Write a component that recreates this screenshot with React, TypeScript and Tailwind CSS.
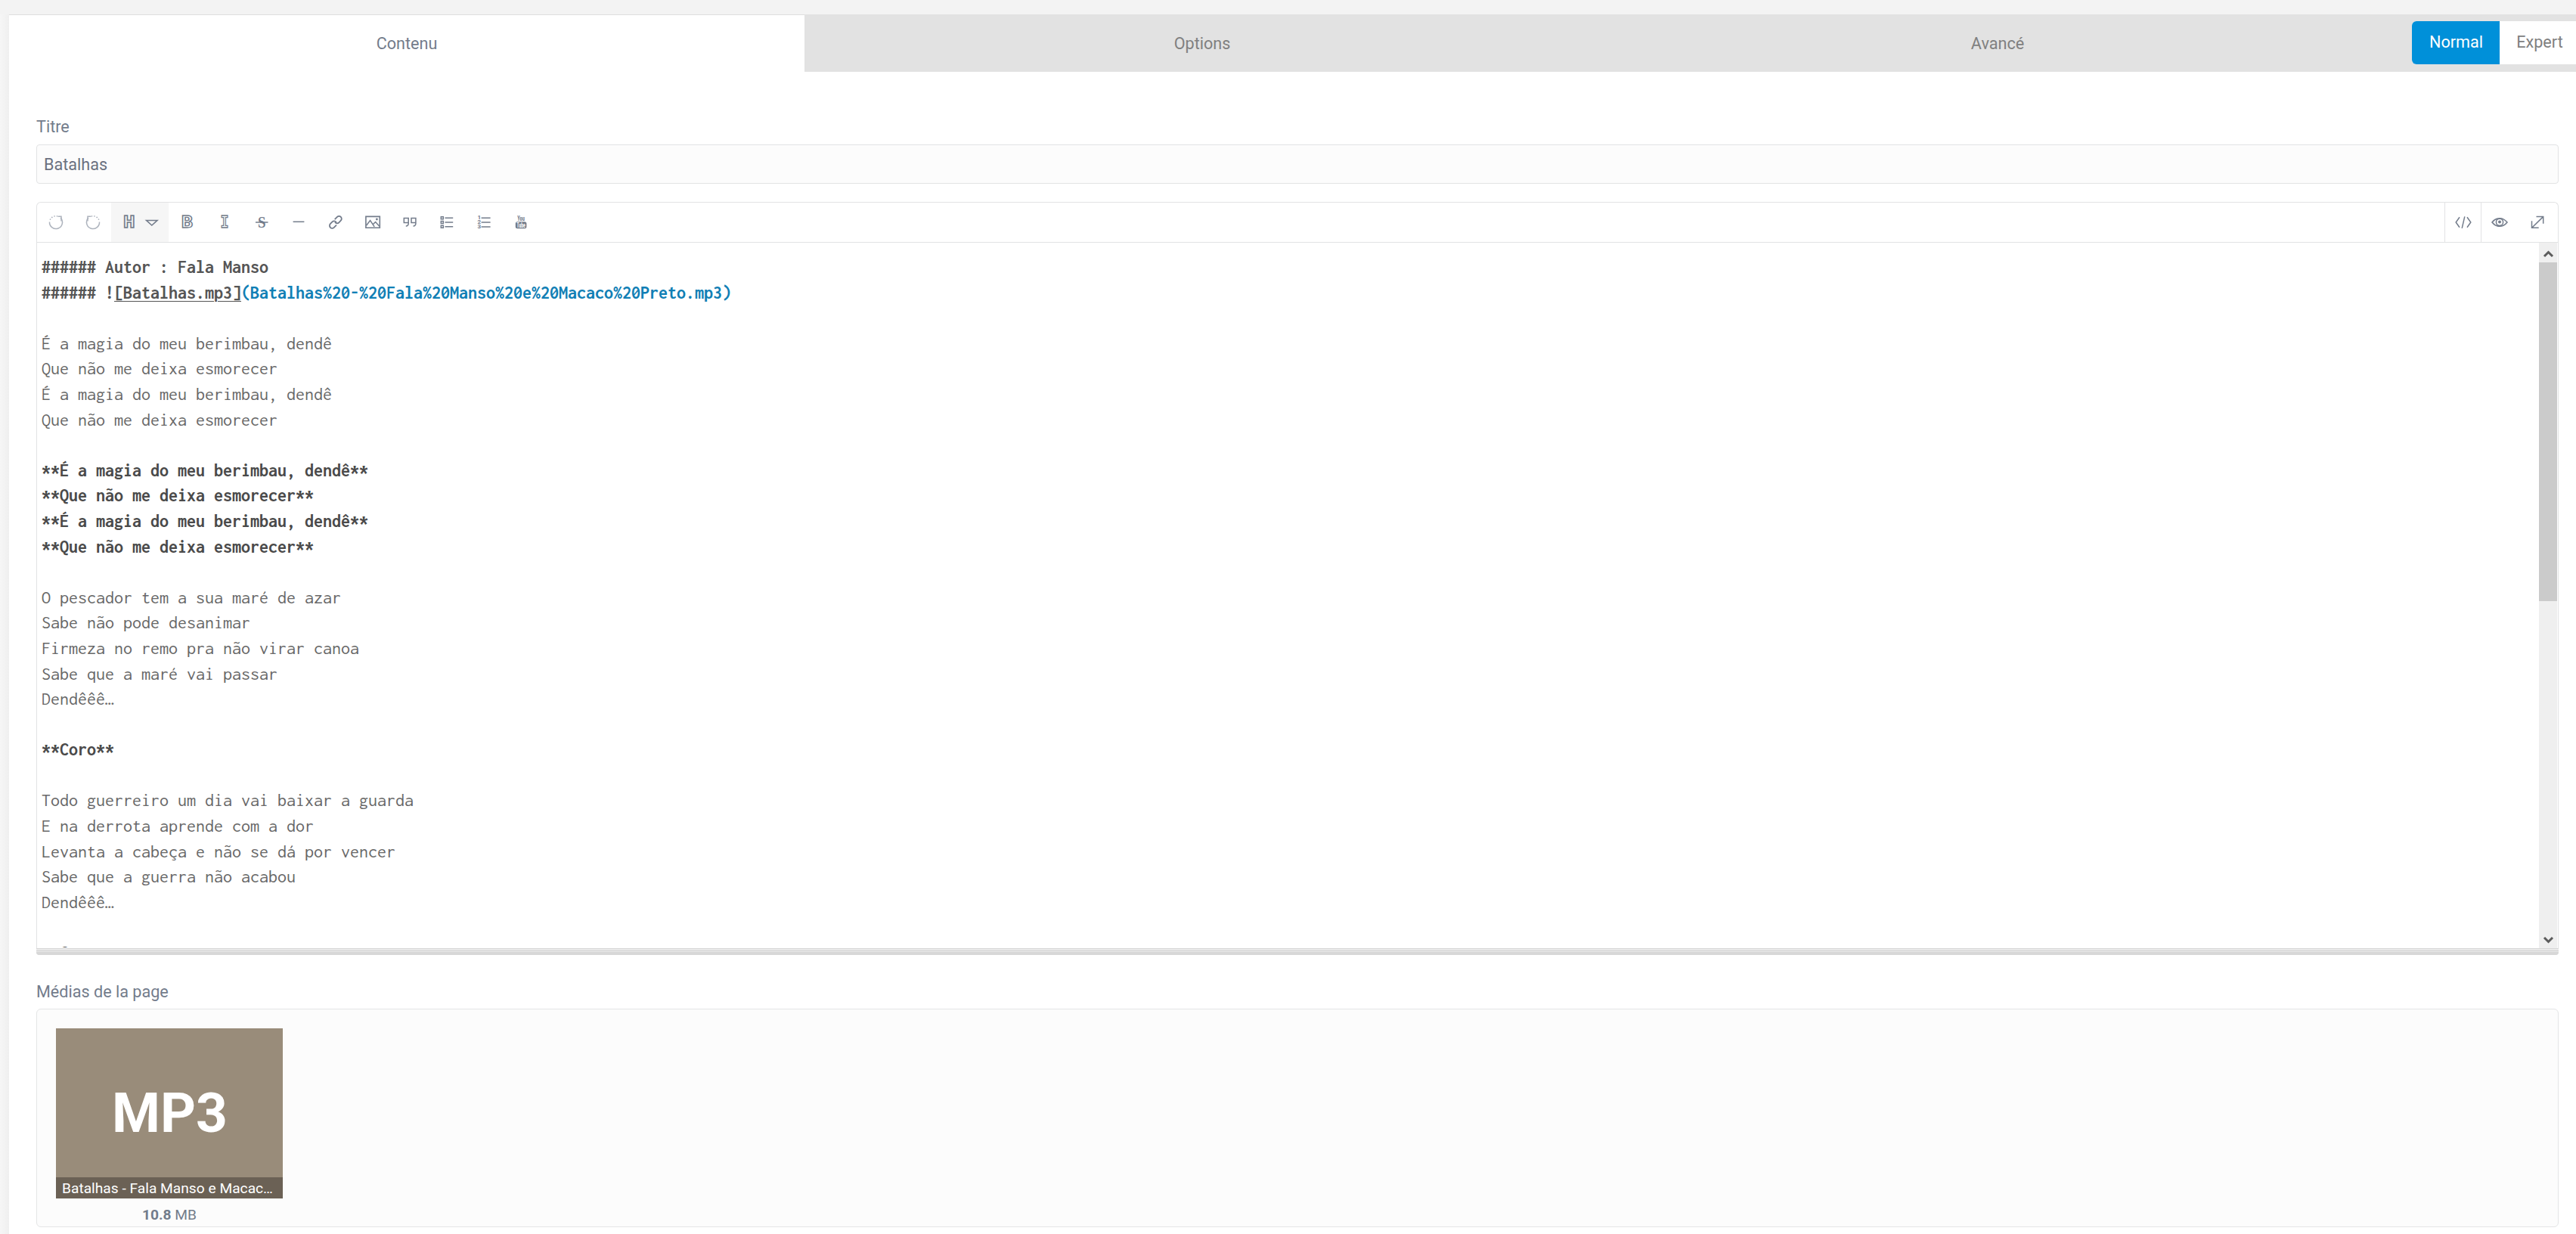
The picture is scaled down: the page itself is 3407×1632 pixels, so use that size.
import type { ReactNode } from 'react';

const tabs = ['Contenu', 'Options', 'Avancé'];

type Line = { text: string; bold?: boolean };

const lyrics: Line[] = [
	{ text: '' },
	{ text: 'É a magia do meu berimbau, dendê' },
	{ text: 'Que não me deixa esmorecer' },
	{ text: 'É a magia do meu berimbau, dendê' },
	{ text: 'Que não me deixa esmorecer' },
	{ text: '' },
	{ text: '**É a magia do meu berimbau, dendê**', bold: true },
	{ text: '**Que não me deixa esmorecer**', bold: true },
	{ text: '**É a magia do meu berimbau, dendê**', bold: true },
	{ text: '**Que não me deixa esmorecer**', bold: true },
	{ text: '' },
	{ text: 'O pescador tem a sua maré de azar' },
	{ text: 'Sabe não pode desanimar' },
	{ text: 'Firmeza no remo pra não virar canoa' },
	{ text: 'Sabe que a maré vai passar' },
	{ text: 'Dendêêê…' },
	{ text: '' },
	{ text: '**Coro**', bold: true },
	{ text: '' },
	{ text: 'Todo guerreiro um dia vai baixar a guarda' },
	{ text: 'E na derrota aprende com a dor' },
	{ text: 'Levanta a cabeça e não se dá por vencer' },
	{ text: 'Sabe que a guerra não acabou' },
	{ text: 'Dendêêê…' },
	{ text: '' },
	{ text: '**Coro**', bold: true },
];

const Icon = ({ children }: { children: ReactNode }) => (
	<svg
		className="h-6 w-6 overflow-visible"
		viewBox="0 0 24 24"
		fill="none"
		stroke="currentColor"
		strokeWidth="1.5"
	>
		{children}
	</svg>
);

const OutlineLetter = ({ letter, x, width }: { letter: string; x: number; width: number }) => (
	<Icon>
		<text
			x={x}
			y="19.2"
			textLength={width}
			lengthAdjust="spacingAndGlyphs"
			strokeWidth="1.3"
			className="font-['DejaVu_Sans_Mono',monospace] text-[20.5px] font-bold"
		>
			{letter}
		</text>
	</Icon>
);

const UndoIcon = () => (
	<Icon>
		<path d="M18 6A8.5 8.5 0 1 1 3.5 11.5" />
		<path d="M4.2 8.8A8.5 8.5 0 0 1 14 3.9" strokeDasharray="1.5 2" />
		<path d="M14.5 4.2H19V10.5" />
	</Icon>
);

const RedoIcon = () => (
	<Icon>
		<path d="M6 6A8.5 8.5 0 1 0 20.5 11.5" />
		<path d="M19.8 8.8A8.5 8.5 0 0 0 10 3.9" strokeDasharray="1.5 2" />
		<path d="M9.5 4.2H5V10.5" />
	</Icon>
);

const StrikeIcon = () => (
	<Icon>
		<text
			x="7"
			y="18.8"
			textLength="10.5"
			lengthAdjust="spacingAndGlyphs"
			fill="currentColor"
			stroke="none"
			className="font-['Liberation_Serif',serif] text-[21px] font-bold"
		>
			S
		</text>
		<path d="M4 12H20.5" />
	</Icon>
);

const LinkIcon = () => (
	<Icon>
		<g transform="rotate(-45 12 12)" strokeWidth="1.8">
			<path d="M10.2 15.2H5.6a3.4 3.4 0 0 1 0-6.8h3.6a3.4 3.4 0 0 1 3.3 4.2" />
			<path d="M13.8 8.4h4.6a3.4 3.4 0 0 1 0 6.8h-3.6a3.4 3.4 0 0 1-3.3-4.2" />
		</g>
	</Icon>
);

const ImageIcon = () => (
	<Icon>
		<path d="M2.9 4.4h18.4v14.8H2.9z" strokeWidth="1.6" />
		<path d="M3.5 16.2 8.6 9.6l5.6 8.2M12.2 14.8l3.4-3.2 5.2 5.6" />
		<circle cx="17.4" cy="8" r="1.4" fill="currentColor" stroke="none" />
	</Icon>
);

const QuoteIcon = () => (
	<Icon>
		<path d="M10.2 6.6H4.3v6h5.9zM10.2 11v2.6c0 2-1.2 3.4-3.4 3.4" />
		<path d="M19.9 6.6H14v6h5.9zM19.9 11v2.6c0 2-1.2 3.4-3.4 3.4" />
	</Icon>
);

const BulletsIcon = () => (
	<Icon>
		<path d="M4.3 4.8h3v3h-3zM4.3 10.6h3v3h-3zM4.3 16.2h3v3h-3z" />
		<path d="M9.5 6.3h10.7M9.5 12.1h10.7M9.5 17.7h10.7" />
	</Icon>
);

const NumbersIcon = () => (
	<Icon>
		<path d="M8.6 6.3h12M8.6 12.1h12M8.6 17.9h12" />
		<g fill="currentColor" stroke="none" className="font-[Roboto,sans-serif] text-[8px] font-bold">
			<text x="3.6" y="8">1</text>
			<text x="3.6" y="14.4">2</text>
			<text x="3.6" y="20.4">3</text>
		</g>
	</Icon>
);

const YoutubeIcon = () => (
	<Icon>
		<rect x="4.8" y="11.2" width="14.6" height="9" rx="2.5" fill="currentColor" stroke="none" />
		<g stroke="none" className="font-['Roboto_Condensed',Roboto,sans-serif] text-[8.5px] font-bold">
			<text x="7.2" y="9.8" textLength="9.6" lengthAdjust="spacingAndGlyphs" fill="currentColor">You</text>
			<text x="6.6" y="18.8" textLength="11" lengthAdjust="spacingAndGlyphs" fill="white">Tube</text>
		</g>
	</Icon>
);

const ToolButton = ({ children }: { children: ReactNode }) => (
	<button className="flex w-[49px] items-center justify-center">{children}</button>
);

const ScrollArrow = ({ d }: { d: string }) => (
	<svg className="h-[26px] w-6" viewBox="0 0 24 26" fill="none" stroke="#5c5c5c" strokeWidth="3">
		<path d={d} />
	</svg>
);

const Toolbar = () => (
	<div className="flex h-[53px] justify-between border-b border-[#e2e3e4] text-[#737c8b]">
		<div className="flex">
			<div className="flex text-[#adb3bd]">
				<ToolButton><UndoIcon /></ToolButton>
				<ToolButton><RedoIcon /></ToolButton>
			</div>
			<button className="flex w-[76px] items-center justify-center gap-1.5 bg-[#f6f6f6] pl-0.5">
				<OutlineLetter letter="H" x={4} width={15.5} />
				<Icon>
					<path d="M4.5 9.4h14.6L11.8 16z" />
				</Icon>
			</button>
			<ToolButton><OutlineLetter letter="B" x={4} width={15} /></ToolButton>
			<ToolButton><OutlineLetter letter="I" x={6.5} width={11} /></ToolButton>
			<ToolButton><StrikeIcon /></ToolButton>
			<ToolButton>
				<Icon>
					<path d="M4.6 11.3h14.8" />
				</Icon>
			</ToolButton>
			<ToolButton><LinkIcon /></ToolButton>
			<ToolButton><ImageIcon /></ToolButton>
			<ToolButton><QuoteIcon /></ToolButton>
			<ToolButton><BulletsIcon /></ToolButton>
			<ToolButton><NumbersIcon /></ToolButton>
			<ToolButton><YoutubeIcon /></ToolButton>
		</div>
		<div className="flex pr-[3px]">
			<button className="flex w-12 items-center justify-center border-l border-[#e2e3e4]">
				<Icon>
					<path d="M7 5.2 2.2 12 7 18.8M17 5.2 21.8 12 17 18.8M13.8 4.4 10.2 19.8" />
				</Icon>
			</button>
			<button className="flex w-[50px] items-center justify-center border-l border-[#e2e3e4] pr-px">
				<Icon>
					<path d="M2 12c3-3.7 6.3-5.3 10-5.3s7 1.6 10 5.3c-3 3.7-6.3 5.3-10 5.3S5 15.7 2 12z" />
					<circle cx="12" cy="11.8" r="4.6" />
					<circle cx="12" cy="11.5" r="2" fill="currentColor" stroke="none" />
				</Icon>
			</button>
			<ToolButton>
				<Icon>
					<path d="M4.6 19.2 19.6 4.6M10.5 4.5h9.2v9.2M4.5 10.3v9h9.2" />
				</Icon>
			</ToolButton>
		</div>
	</div>
);

const Editor = () => (
	<div className="mt-6 rounded-t-md border-x border-t border-[#e2e3e4]">
		<Toolbar />
		<div className="flex h-[933px]">
			<div className="flex-1 overflow-hidden border-b border-white pt-4 pl-1.5 font-['Inconsolata','Liberation_Mono',monospace] text-2xl leading-[33.6px] whitespace-pre text-[#686868]">
				<div className="font-bold text-[#555]">###### Autor : Fala Manso</div>
				<div className="font-bold text-[#555]">
					###### !<span className="underline decoration-1 underline-offset-[3px]">[Batalhas.mp3]</span>
					<span className="text-[#117fb5]">(Batalhas%20-%20Fala%20Manso%20e%20Macaco%20Preto.mp3)</span>
				</div>
				{lyrics.map((line, i) => (
					<div key={i} className={line.bold ? 'h-[33.6px] font-bold text-[#4a4a4a]' : 'h-[33.6px]'}>
						{line.text}
					</div>
				))}
			</div>
			{/* Scrollbar */}
			<div className="mr-px flex w-6 flex-col bg-[#efefef]">
				<ScrollArrow d="M7 18 12.5 12.5 18 18" />
				<div className="h-[448px] bg-[#cbcbcb]" />
				<div className="mt-auto">
					<ScrollArrow d="M7 12 12.5 17.5 18 12" />
				</div>
			</div>
		</div>
	</div>
);

const ResizeHandle = () => (
	<div className="flex h-[9px] flex-col overflow-hidden rounded-b-sm bg-[#e9e9e9]">
		<div className="h-0.5 bg-[#d7d7d7]" />
		<div className="mt-0.5 h-px bg-[#d2d2d2]" />
		<div className="mt-0.5 h-2 bg-[#d7d7d7]" />
	</div>
);

const Medias = () => (
	<div className="mt-1.5 h-[289px] rounded-md border border-[#e4e5e6] bg-[#fcfcfc] p-[25px]">
		<div className="w-[300px]">
			<div className="flex h-[225px] flex-col bg-[#998c7a]">
				<div className="flex h-[197px] items-center justify-center pt-[27px] pl-px text-[73px] leading-none font-bold text-white">
					MP3
				</div>
				<div className="h-7 bg-[#6b6155] px-2 pt-px text-[19.2px] leading-7 whitespace-nowrap text-white">
					Batalhas - Fala Manso e Macac…
				</div>
			</div>
			<div className="pt-2 text-center text-[19.2px] leading-7">
				<b>10.8</b> MB
			</div>
		</div>
	</div>
);

const App = () => {
	return (
		<div className="flex h-[1632px] w-[3407px] flex-col overflow-hidden bg-[#f3f3f3] font-[Roboto,sans-serif] text-[21.6px] text-[#737c8b]">
			<div className="h-[19px] shrink-0" />
			<div className="flex flex-1">
				<div className="w-3 bg-gradient-to-r from-[#f6f6f6] to-[#efefef]" />
				<main className="flex-1 bg-white">
					{/* Tabs */}
					<div className="relative flex h-[76px] bg-[#e2e2e2]">
						{tabs.map((tab, i) => (
							<div
								key={tab}
								className={
									i === 0
										? 'flex w-[1052px] items-center justify-center border-t border-[#dedede] bg-white pt-0.5'
										: 'flex w-[1052px] items-center justify-center pt-[3px] text-[#808080]'
								}
							>
								{tab}
							</div>
						))}
						<div className="absolute top-[9px] right-0 flex h-[57px] w-[217px] overflow-hidden rounded-l-md bg-white text-[#808080]">
							<button className="w-[116px] bg-[#0090d9] pl-px text-white">Normal</button>
							<button className="w-[101px] pl-[5px]">Expert</button>
						</div>
					</div>

					<div className="pr-[23px] pl-9">
						<div className="flex h-24 items-end pb-[7px] leading-[33px]">Titre</div>
						<input
							className="block h-[52px] w-full rounded border border-[#e2e3e4] bg-[#fcfcfc] px-[9px] text-[#6b7180]"
							defaultValue="Batalhas"
						/>
						<Editor />
						<ResizeHandle />
						<div className="mt-[33px] leading-8">Médias de la page</div>
						<Medias />
					</div>
				</main>
			</div>
		</div>
	);
};

export default App;
